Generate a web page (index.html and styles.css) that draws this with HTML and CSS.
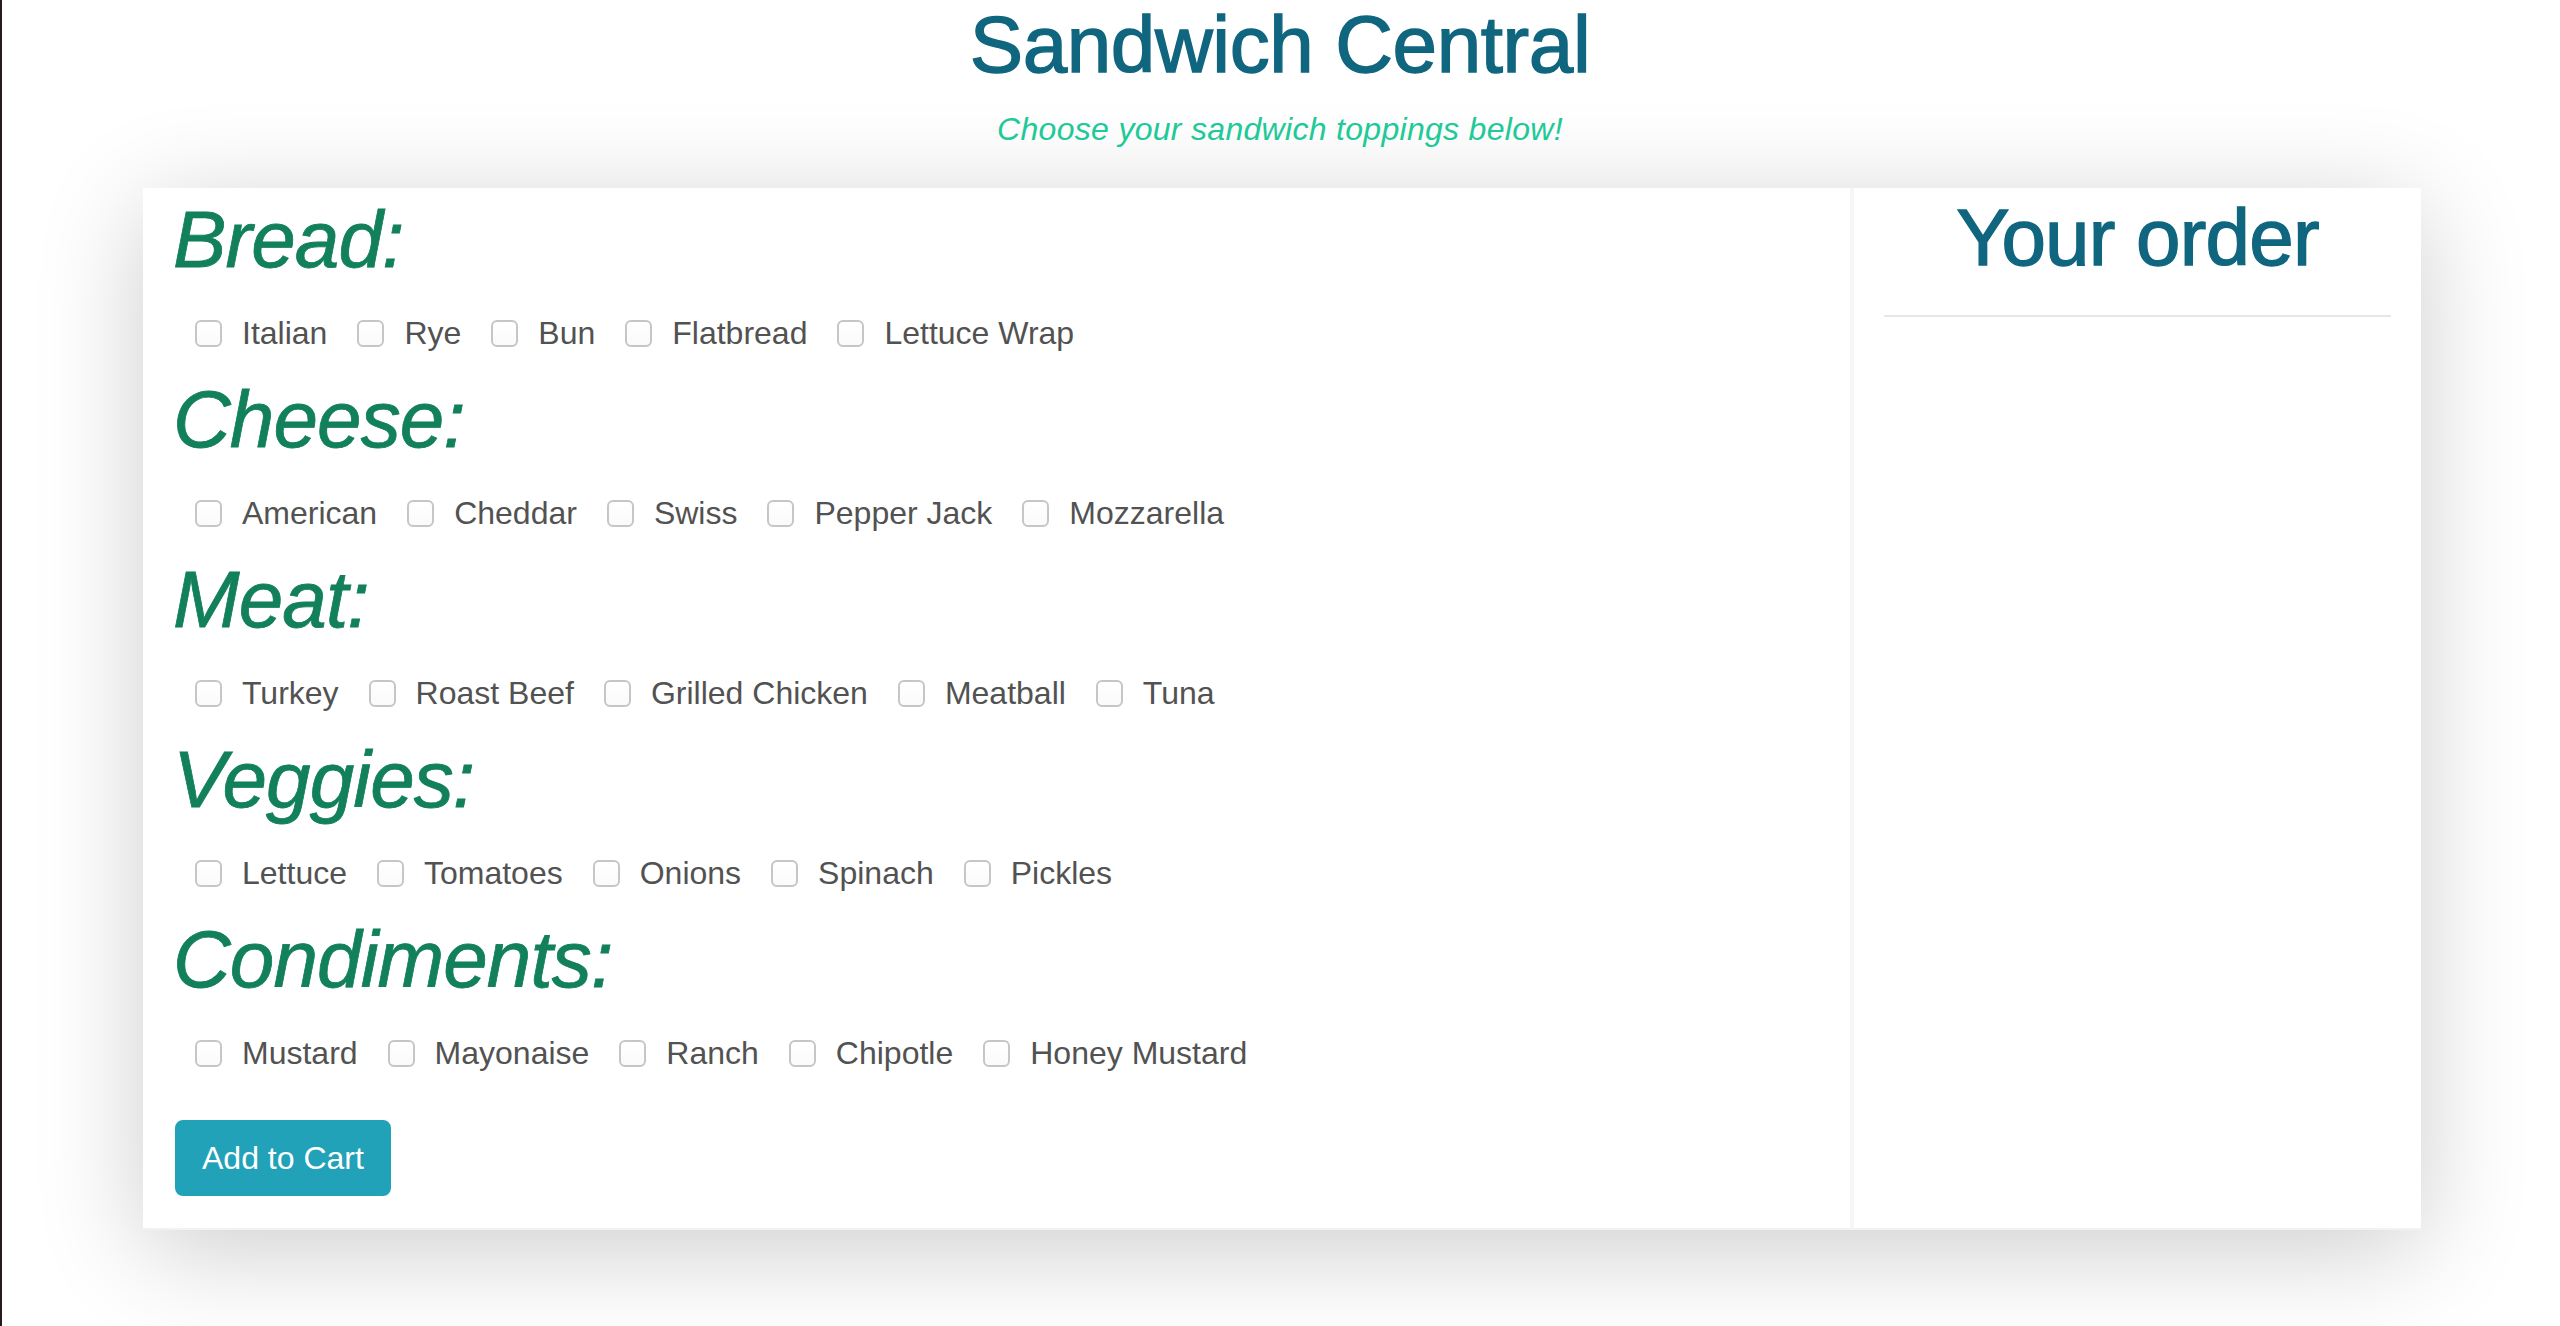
FILE: index.html
```html
<!DOCTYPE html>
<html lang="en">
<head>
<meta charset="utf-8">
<title>Sandwich Central</title>
<link rel="stylesheet" href="styles.css">
</head>
<body>
<header class="masthead">
  <h1 class="title">Sandwich Central</h1>
  <p class="tagline">Choose your sandwich toppings below!</p>
</header>
<main class="card">
  <section class="builder">
    <h1 class="group-title">Bread:</h1>
    <div class="options">
      <label class="option"><input type="checkbox" class="check"><span>Italian</span></label>
      <label class="option"><input type="checkbox" class="check"><span>Rye</span></label>
      <label class="option"><input type="checkbox" class="check"><span>Bun</span></label>
      <label class="option"><input type="checkbox" class="check"><span>Flatbread</span></label>
      <label class="option"><input type="checkbox" class="check"><span>Lettuce Wrap</span></label>
    </div>
    <h1 class="group-title">Cheese:</h1>
    <div class="options">
      <label class="option"><input type="checkbox" class="check"><span>American</span></label>
      <label class="option"><input type="checkbox" class="check"><span>Cheddar</span></label>
      <label class="option"><input type="checkbox" class="check"><span>Swiss</span></label>
      <label class="option"><input type="checkbox" class="check"><span>Pepper Jack</span></label>
      <label class="option"><input type="checkbox" class="check"><span>Mozzarella</span></label>
    </div>
    <h1 class="group-title">Meat:</h1>
    <div class="options">
      <label class="option"><input type="checkbox" class="check"><span>Turkey</span></label>
      <label class="option"><input type="checkbox" class="check"><span>Roast Beef</span></label>
      <label class="option"><input type="checkbox" class="check"><span>Grilled Chicken</span></label>
      <label class="option"><input type="checkbox" class="check"><span>Meatball</span></label>
      <label class="option"><input type="checkbox" class="check"><span>Tuna</span></label>
    </div>
    <h1 class="group-title">Veggies:</h1>
    <div class="options">
      <label class="option"><input type="checkbox" class="check"><span>Lettuce</span></label>
      <label class="option"><input type="checkbox" class="check"><span>Tomatoes</span></label>
      <label class="option"><input type="checkbox" class="check"><span>Onions</span></label>
      <label class="option"><input type="checkbox" class="check"><span>Spinach</span></label>
      <label class="option"><input type="checkbox" class="check"><span>Pickles</span></label>
    </div>
    <h1 class="group-title">Condiments:</h1>
    <div class="options">
      <label class="option"><input type="checkbox" class="check"><span>Mustard</span></label>
      <label class="option"><input type="checkbox" class="check"><span>Mayonaise</span></label>
      <label class="option"><input type="checkbox" class="check"><span>Ranch</span></label>
      <label class="option"><input type="checkbox" class="check"><span>Chipotle</span></label>
      <label class="option"><input type="checkbox" class="check"><span>Honey Mustard</span></label>
    </div>
    <button type="button" class="add-btn">Add to Cart</button>
  </section>
  <aside class="order">
    <h1 class="order-title">Your order</h1>
    <hr class="order-rule">
  </aside>
</main>
</body>
</html>
```
FILE: styles.css
```css
* { box-sizing: border-box; }

html, body {
  margin: 0;
  padding: 0;
}

body {
  min-height: 1326px;
  background: #ffffff;
  font-family: "Liberation Sans", Arial, sans-serif;
  box-shadow: inset 2px 0 0 #241a1f;
  overflow: hidden;
}

.masthead {
  text-align: center;
}

.title {
  margin: 0;
  font-size: 80px;
  line-height: 90px;
  font-weight: 400;
  color: #10657f;
  letter-spacing: -0.4px;
  -webkit-text-stroke: 1.4px #10657f;
}

.tagline {
  margin: 15px 0 35px;
  font-size: 32px;
  line-height: 48px;
  font-style: italic;
  color: #20c997;
  letter-spacing: 0.3px;
}

.card {
  width: 2278px;
  margin: 0 0 0 calc(50% - 1137px);
  background: #ffffff;
  display: grid;
  grid-template-columns: 1707px 571px;
  border-bottom: 2px solid #f2f2f2;
  box-shadow: 0 20px 100px rgba(0, 0, 0, 0.2);
}

.builder {
  padding: 4px 30px 32px 27px;
}

.group-title {
  margin: 0;
  padding-left: 3px;
  font-size: 80px;
  line-height: 96px;
  font-weight: 400;
  font-style: italic;
  color: #12805a;
  letter-spacing: -0.9px;
  -webkit-text-stroke: 0.8px #12805a;
}

.options {
  display: flex;
  align-items: center;
  height: 48px;
  margin: 21px 0 15px;
  padding-left: 25px;
}

.option {
  display: inline-flex;
  align-items: center;
  margin-right: 30px;
  font-size: 32px;
  line-height: 48px;
  color: #525252;
}

.check {
  appearance: none;
  -webkit-appearance: none;
  width: 27px;
  height: 27px;
  margin: 0 20px 0 0;
  border: 2px solid #c6c6c6;
  border-radius: 6px;
  background: linear-gradient(#ffffff, #fafafa);
}

.add-btn {
  margin: 28px 0 0 5px;
  padding: 12px 25px;
  font-family: inherit;
  font-size: 32px;
  line-height: 48px;
  color: #ffffff;
  background: #22a2b8;
  border: 2px solid #22a2b8;
  border-radius: 8px;
}

.order {
  border-left: 4px solid #f5f6f8;
  padding: 2px 30px 0;
}

.order-title {
  margin: 0;
  text-align: center;
  font-size: 80px;
  line-height: 96px;
  font-weight: 400;
  color: #10657f;
  letter-spacing: -0.8px;
  -webkit-text-stroke: 1.4px #10657f;
}

.order-rule {
  margin: 29px 0 0;
  border: 0;
  border-top: 2px solid #e6e6e6;
}
```
